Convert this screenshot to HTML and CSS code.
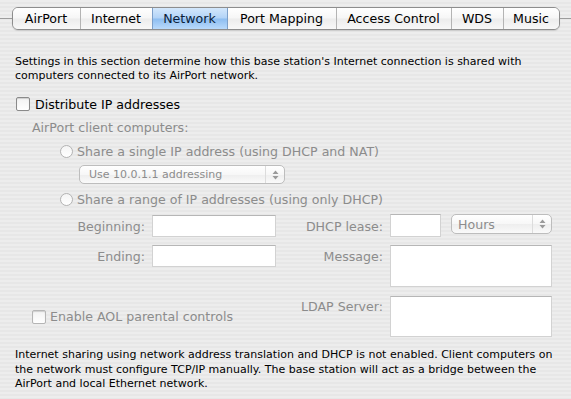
FILE: index.html
```html
<!DOCTYPE html>
<html>
<head>
<meta charset="utf-8">
<link rel="stylesheet" href="styles.css">
</head>
<body>
<div class="window">
  <div class="tabbar">
    <span class="rule"></span>
    <div class="tabs">
      <div class="tab first">AirPort</div>
      <div class="tab">Internet</div>
      <div class="tab selected">Network</div>
      <div class="tab">Port Mapping</div>
      <div class="tab">Access Control</div>
      <div class="tab">WDS</div>
      <div class="tab last">Music</div>
    </div>
    <span class="rule"></span>
  </div>

  <div class="pane">
    <p class="note intro">Settings in this section determine how this base station's Internet connection is shared with<br>computers connected to its AirPort network.</p>

    <div class="check main"><span class="box"></span><span>Distribute IP addresses</span></div>

    <div class="sub">AirPort client computers:</div>
    <div class="radio"><span class="dot"></span><span>Share a single IP address (using DHCP and NAT)</span></div>
    <div class="popup wide"><span class="ptext">Use 10.0.1.1 addressing</span><span class="arrows"><svg width="7" height="10" viewBox="0 0 7 10"><path d="M3.5 0.5 L6.5 4 L0.5 4 Z M0.5 6 L6.5 6 L3.5 9.5 Z" fill="#9a9a9a"/></svg></span></div>
    <div class="radio second"><span class="dot"></span><span>Share a range of IP addresses (using only DHCP)</span></div>

    <div class="form">
      <div class="lbl r1">Beginning:</div>
      <div class="field r1 c2"></div>
      <div class="lbl r1 c3">DHCP lease:</div>
      <div class="lease r1">
        <div class="field small"></div>
        <div class="popup hours"><span class="ptext">Hours</span><span class="arrows"><svg width="7" height="10" viewBox="0 0 7 10"><path d="M3.5 0.5 L6.5 4 L0.5 4 Z M0.5 6 L6.5 6 L3.5 9.5 Z" fill="#9a9a9a"/></svg></span></div>
      </div>

      <div class="lbl r2">Ending:</div>
      <div class="field r2 c2 short"></div>
      <div class="lbl r2 c3">Message:</div>
      <div class="field r2 c4 tall"></div>

      <div class="check aol r3"><span class="box"></span><span>Enable AOL parental controls</span></div>
      <div class="lbl r3 c3">LDAP Server:</div>
      <div class="field r3 c4 tall"></div>
    </div>

    <p class="note bottom">Internet sharing using network address translation and DHCP is not enabled. Client computers on<br>the network must configure TCP/IP manually. The base station will act as a bridge between the<br>AirPort and local Ethernet network.</p>
  </div>
</div>
</body>
</html>
```

FILE: styles.css
```css
html, body {
  margin: 0;
  padding: 0;
}
body {
  width: 571px;
  height: 399px;
  overflow: hidden;
  font-family: "DejaVu Sans", "Liberation Sans", sans-serif;
  color: #000;
  background: repeating-linear-gradient(to bottom, #ededed 0, #ededed 2px, #e7e7e7 2px, #e7e7e7 4px);
}
.window {
  width: 571px;
  height: 399px;
}
.tabbar {
  display: flex;
  align-items: center;
  margin-top: 8px;
  height: 21px;
}
.rule {
  flex: 1;
  height: 1px;
  background: #9c9c9c;
}
.tabs {
  display: grid;
  grid-template-columns: 67px 72px 75px 109px 115px 52px 56px;
  height: 21px;
  border: 1px solid #8d8d8d;
  border-radius: 6px;
  overflow: hidden;
  box-shadow: 0 1px 1px rgba(0,0,0,0.12);
}
.tab {
  display: flex;
  align-items: center;
  justify-content: center;
  white-space: nowrap;
  font-size: 12.6px;
  background: linear-gradient(to bottom, #ffffff 0%, #f6f6f6 48%, #ececec 52%, #f8f8f8 100%);
  border-left: 1px solid #b4b4b4;
}
.tab.first { border-left: none; }
.tab.selected {
  color: #0b1d3a;
  background: linear-gradient(to bottom, #d3e7fc 0%, #b2d3f7 48%, #8dbdf0 52%, #b9dafc 100%);
  border-left-color: #7c9fc9;
}
.tab.selected + .tab { border-left-color: #7c9fc9; }

.pane {
  padding: 0 15px;
}
.note {
  margin: 0;
  font-size: 11px;
  line-height: 14px;
}
.intro { margin-top: 26px; }
.bottom { margin-top: 11px; line-height: 14.5px; }

.check {
  display: flex;
  align-items: center;
  height: 16px;
}
.box {
  width: 12px;
  height: 12px;
  border: 1px solid #8a8a8a;
  border-radius: 2px;
  background: linear-gradient(to bottom, #f2f2f2, #ffffff);
  box-shadow: inset 0 1px 1px rgba(0,0,0,0.15);
  flex: none;
}
.check.main {
  margin-top: 13px;
  margin-left: 1px;
  font-size: 12.6px;
}
.check.main .box { margin-right: 5px; }

.sub {
  margin-top: 9px;
  margin-left: 17px;
  font-size: 12.6px;
  line-height: 14px;
  color: #8c8c8c;
}
.radio {
  display: flex;
  align-items: center;
  height: 16px;
  margin-top: 8px;
  margin-left: 45px;
  font-size: 12.6px;
  color: #8c8c8c;
}
.radio.second { margin-top: 7px; }
.dot {
  width: 11px;
  height: 11px;
  border: 1px solid #b3b3b3;
  border-radius: 50%;
  background: linear-gradient(to bottom, #f4f4f4, #ffffff);
  margin-right: 4px;
  flex: none;
}
.popup {
  display: flex;
  align-items: center;
  box-sizing: border-box;
  border: 1px solid #bdbdbd;
  border-radius: 5px;
  background: linear-gradient(to bottom, #ffffff 0%, #f7f7f7 50%, #eeeeee 52%, #fafafa 100%);
  color: #8c8c8c;
}
.ptext { flex: 1; }
.arrows {
  width: 18px;
  align-self: stretch;
  display: flex;
  align-items: center;
  justify-content: center;
  border-left: 1px solid #dcdcdc;
}
.popup.wide {
  margin-top: 6px;
  margin-left: 64px;
  width: 206px;
  height: 19px;
  font-size: 11px;
  padding-left: 9px;
}
.popup.hours {
  width: 101px;
  height: 20px;
  font-size: 12.6px;
  padding-left: 6px;
}

.form {
  margin-top: 8px;
  display: grid;
  grid-template-columns: 130px 124px 100px 162px;
  column-gap: 7px;
  grid-template-rows: 22px 42px 42px;
  row-gap: 8px;
}
.form > .r3 { margin-top: 1px; }
.r1 { grid-row: 1; }
.r2 { grid-row: 2; }
.r3 { grid-row: 3; }
.c2 { grid-column: 2; }
.c3 { grid-column: 3; }
.c4 { grid-column: 4; }
.lbl {
  font-size: 12.6px;
  color: #8c8c8c;
  text-align: right;
  line-height: 16px;
  padding-top: 4px;
}
.lbl.r3 { padding-top: 3px; }
.field {
  box-sizing: border-box;
  background: #fff;
  border: 1px solid #d2d2d2;
  border-top-color: #b6b6b6;
}
.field.short { height: 22px; }
.lease {
  grid-column: 4;
  display: flex;
  align-items: flex-start;
  column-gap: 10px;
  margin-top: -1px;
}
.field.small { width: 51px; height: 23px; }
.aol {
  grid-column: 1 / 3;
  align-self: center;
  margin-left: 17px;
  font-size: 12.6px;
  color: #8c8c8c;
}
.aol .box {
  border-color: #b5b5b5;
  margin-right: 4px;
}
```
